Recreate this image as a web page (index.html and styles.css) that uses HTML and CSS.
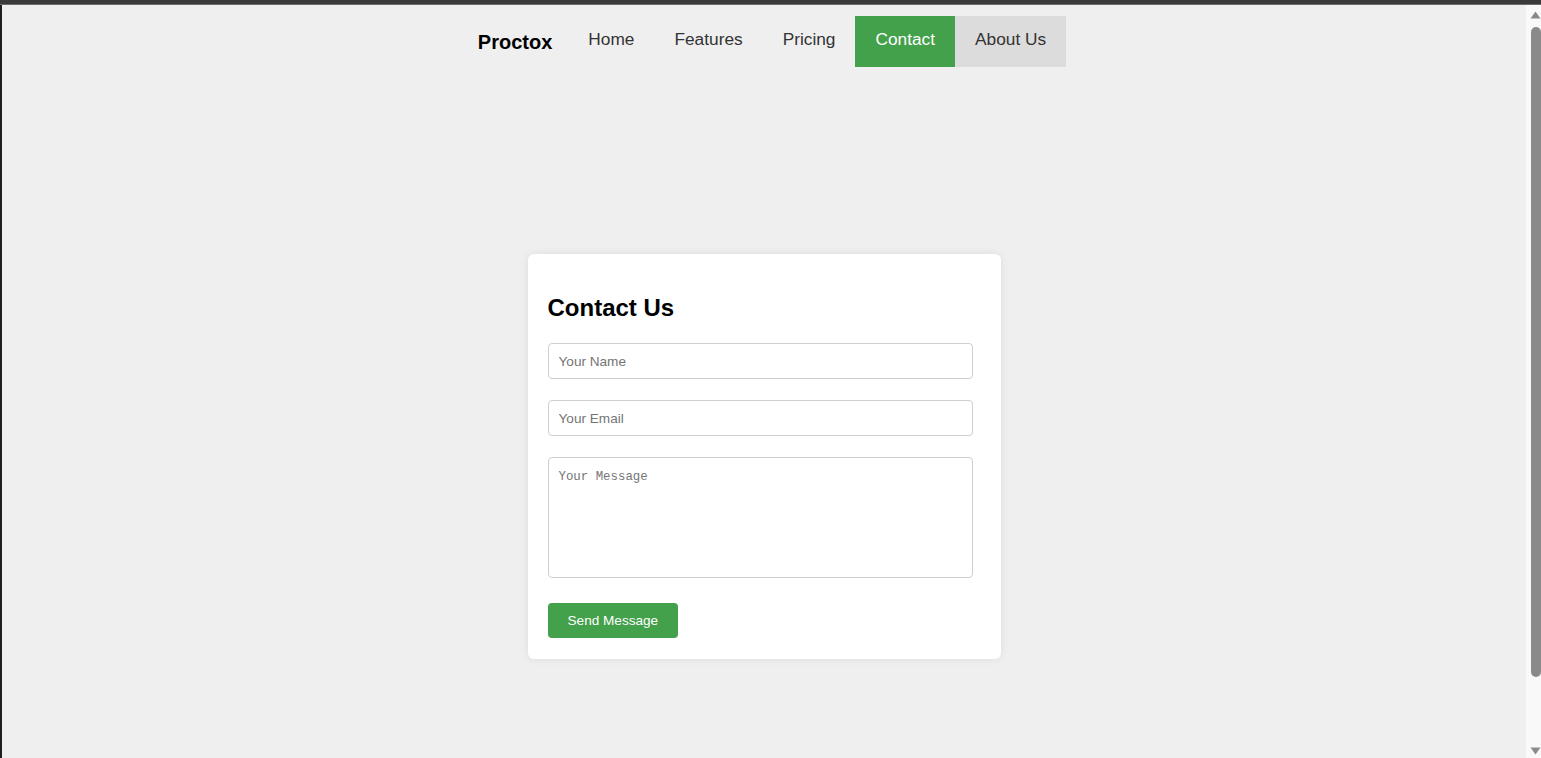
FILE: index.html
```html
<!DOCTYPE html>
<html lang="en">
<head>
<meta charset="utf-8">
<title>Proctox - Contact</title>
<link rel="stylesheet" href="styles.css">
</head>
<body>
  <div class="topbar"></div>
  <div class="window">
    <div class="edge"></div>
    <div class="page">
      <nav class="nav">
        <div class="logo">Proctox</div>
        <a class="nav-link" href="#">Home</a>
        <a class="nav-link" href="#">Features</a>
        <a class="nav-link" href="#">Pricing</a>
        <a class="nav-link active" href="#">Contact</a>
        <a class="nav-link hover" href="#">About Us</a>
      </nav>
      <main class="main">
        <section class="card">
          <h2 class="card-title">Contact Us</h2>
          <form class="form">
            <input class="field" type="text" placeholder="Your Name">
            <input class="field" type="email" placeholder="Your Email">
            <textarea class="field area" placeholder="Your Message"></textarea>
            <button class="send" type="button">Send Message</button>
          </form>
        </section>
      </main>
    </div>
    <div class="scrollbar">
      <svg class="arrow" width="11" height="8" viewBox="0 0 11 8"><polygon points="5.5,0.5 10.5,7.5 0.5,7.5" fill="#8a8a8a"/></svg>
      <div class="thumb"></div>
      <svg class="arrow" width="11" height="8" viewBox="0 0 11 8"><polygon points="0.5,0.5 10.5,0.5 5.5,7.5" fill="#8a8a8a"/></svg>
    </div>
  </div>
</body>
</html>
```

FILE: styles.css
```css
* { box-sizing: border-box; }

html, body {
  margin: 0;
  height: 100%;
  overflow: hidden;
}

body {
  font-family: "Liberation Sans", Arial, sans-serif;
  background: #f0eff0;
  display: flex;
  flex-direction: column;
}

.topbar {
  height: 5px;
  background: #3a3a3a;
  border-bottom: 1px solid #6c6c6c;
  flex: none;
}

.window {
  flex: 1;
  display: flex;
  min-height: 0;
}

.edge {
  width: 2px;
  background: #1e1e1e;
  flex: none;
}

.page {
  flex: 1;
  background: #f0eff0;
  display: flex;
  flex-direction: column;
}

.nav {
  margin-top: 11px;
  display: flex;
  justify-content: center;
  align-items: center;
  padding-left: 16px;
}

.logo {
  font-size: 20px;
  font-weight: bold;
  color: #000;
  margin-right: 16px;
  padding-top: 2px;
}

.nav-link {
  font-size: 17.3px;
  line-height: 19px;
  padding: 14px 20px 18px;
  color: #333;
  text-decoration: none;
}

.nav-link.active {
  background: #43a04b;
  color: #fff;
}

.nav-link.hover {
  background: #dddcdd;
}

.main {
  padding-top: 187px;
  display: flex;
  justify-content: center;
}

.card {
  width: 473px;
  background: #fff;
  border-radius: 6px;
  box-shadow: 0 0 8px rgba(0, 0, 0, 0.08);
  padding: 20px 20px 21px;
}

.card-title {
  font-size: 24px;
  font-weight: bold;
  color: #000;
  margin: 20px 0 22px;
  line-height: 27px;
}

.form {
  display: flex;
  flex-direction: column;
  align-items: flex-start;
}

.field {
  width: 425px;
  height: 36px;
  border: 1px solid #cfcfcf;
  border-radius: 4px;
  padding: 0 10px;
  font-family: "Liberation Sans", Arial, sans-serif;
  font-size: 13.6px;
  color: #333;
  background: #fff;
  margin: 0 0 21px;
  outline: none;
}

.field::placeholder {
  color: #757575;
}

.area {
  height: 121px;
  padding: 11px 10px 10px;
  resize: none;
  font-family: "Liberation Mono", "DejaVu Sans Mono", monospace;
  font-size: 12.4px;
  line-height: 16px;
  margin-bottom: 25px;
  display: block;
}

.send {
  background: #43a04b;
  color: #fff;
  border: none;
  border-radius: 4px;
  height: 35px;
  padding: 0 20px;
  font-family: "Liberation Sans", Arial, sans-serif;
  font-size: 13.6px;
  cursor: pointer;
}

.scrollbar {
  width: 15px;
  flex: none;
  background: #f9f9f9;
  display: flex;
  flex-direction: column;
  align-items: center;
  padding: 6px 0 3px 4px;
}

.arrow {
  flex: none;
}

.thumb {
  width: 10px;
  flex: 1;
  margin: 8px 0 70px;
  background: #8a8a8a;
  border-radius: 5px;
}
```
